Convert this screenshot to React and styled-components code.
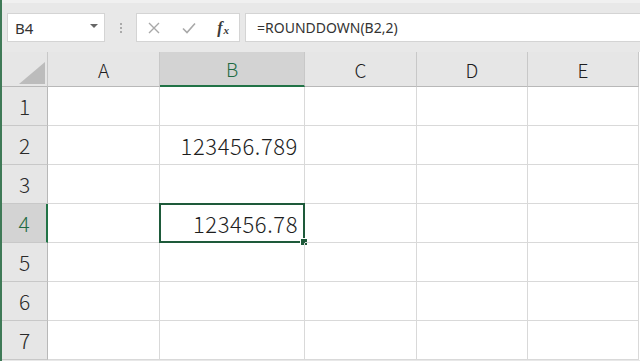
import styled, { createGlobalStyle } from 'styled-components';
import React from 'react';

const GlobalStyle = createGlobalStyle`
  html, body { margin: 0; padding: 0; background: #ffffff; }
  body { width: 640px; height: 361px; overflow: hidden; }
`;

const COLS = ['A', 'B', 'C', 'D', 'E'];
const ROWS = [1, 2, 3, 4, 5, 6, 7];

const values = {
  B2: '123456.789',
  B4: '123456.78',
};

function App() {
  const active = { col: 'B', row: 4 };

  return (
    <Window>
      <GlobalStyle />
      <Toolbar>
        <NameBox>
          <span>B4</span>
          <Caret />
        </NameBox>
        <Grip>
          <i /><i /><i />
        </Grip>
        <ButtonBox>
          <svg width="14" height="14" viewBox="0 0 14 14">
            <path d="M2 2 L12 12 M12 2 L2 12" stroke="#a8a8a8" strokeWidth="1.4" fill="none" />
          </svg>
          <svg width="16" height="14" viewBox="0 0 16 14">
            <path d="M2 7.5 L6 11.5 L14 2.5" stroke="#a8a8a8" strokeWidth="1.6" fill="none" />
          </svg>
          <Fx>f<sub>x</sub></Fx>
        </ButtonBox>
        <FormulaInput>=ROUNDDOWN(B2,2)</FormulaInput>
      </Toolbar>

      <Sheet>
        <Corner>
          <svg width="36" height="26" viewBox="0 0 36 26">
            <path d="M34 2 L34 24 L8 24 Z" fill="#bcbcbc" />
          </svg>
        </Corner>
        {COLS.map(c => (
          <ColHeader key={c} $active={c === active.col}>{c}</ColHeader>
        ))}
        {ROWS.map(r => (
          <React.Fragment key={r}>
            <RowHeader $active={r === active.row}>{r}</RowHeader>
            {COLS.map(c => {
              const id = c + r;
              const isActive = c === active.col && r === active.row;
              return (
                <Cell key={id}>
                  {values[id] && <Value>{values[id]}</Value>}
                  {isActive && (
                    <Selection>
                      <Handle />
                    </Selection>
                  )}
                </Cell>
              );
            })}
          </React.Fragment>
        ))}
      </Sheet>
    </Window>
  );
}

export default App;

const Window = styled.div`
  width: 640px;
  height: 361px;
  overflow: hidden;
  box-sizing: border-box;
  border-left: 2px solid #3f7a57;
  background: #e8e8e8;
`;

const Toolbar = styled.div`
  height: 52px;
  box-sizing: border-box;
  padding: 10px 0 0 5px;
  display: flex;
  align-items: flex-start;
  background: #e8e8e8;
  border-top: 3px solid #f0f0f0;
`;

const NameBox = styled.div`
  width: 98px;
  height: 29px;
  box-sizing: border-box;
  background: #ffffff;
  border: 1px solid #d4d4d4;
  display: flex;
  align-items: center;
  justify-content: space-between;
  padding: 0 6px 0 7px;
  font-family: 'Noto Sans', 'Liberation Sans', sans-serif;
  font-size: 15px;
  color: #333;
`;

const Caret = styled.span`
  width: 0;
  height: 0;
  border-left: 4px solid transparent;
  border-right: 4px solid transparent;
  border-top: 4px solid #666;
  margin-top: -3px;
`;

const Grip = styled.div`
  width: 31px;
  height: 29px;
  display: flex;
  flex-direction: column;
  align-items: center;
  justify-content: center;
  gap: 2px;

  i {
    display: block;
    width: 2px;
    height: 2px;
    background: #aaaaaa;
  }
`;

const ButtonBox = styled.div`
  width: 104px;
  height: 29px;
  box-sizing: border-box;
  background: #ffffff;
  border: 1px solid #d4d4d4;
  display: flex;
  align-items: center;
  justify-content: space-between;
  padding: 0 10px 0 10px;
`;

const Fx = styled.span`
  font-family: 'Liberation Serif', serif;
  font-style: italic;
  font-weight: 700;
  font-size: 16px;
  color: #3a3a3a;

  sub {
    font-size: 11px;
    vertical-align: -1px;
    margin-left: 1px;
  }
`;

const FormulaInput = styled.div`
  flex: 1;
  height: 29px;
  box-sizing: border-box;
  margin-left: 5px;
  background: #ffffff;
  border: 1px solid #d4d4d4;
  border-right: none;
  display: flex;
  align-items: center;
  padding-left: 11px;
  font-family: 'Noto Sans', 'Liberation Sans', sans-serif;
  font-size: 14px;
  color: #333;
`;

const Sheet = styled.div`
  display: grid;
  grid-template-columns: 46px 112px 145px 112px 111px 111px;
  grid-template-rows: 35px repeat(7, 39px);
  background: #ffffff;
`;

const Corner = styled.div`
  background: #e6e6e6;
  border-right: 1px solid #c8c8c8;
  border-bottom: 1px solid #b8b8b8;
  display: flex;
  align-items: flex-end;
  justify-content: flex-end;
`;

const ColHeader = styled.div`
  box-sizing: border-box;
  background: ${p => (p.$active ? '#d3d3d3' : '#e6e6e6')};
  border-right: 1px solid #c8c8c8;
  border-bottom: ${p => (p.$active ? '2px solid #217346' : '1px solid #b8b8b8')};
  display: flex;
  align-items: center;
  justify-content: center;
  font-family: 'Noto Sans CJK JP', 'Noto Sans', sans-serif;
  font-weight: 300;
  font-size: 19px;
  color: ${p => (p.$active ? '#1f6b43' : '#1e1e1e')};
`;

const RowHeader = styled.div`
  box-sizing: border-box;
  background: ${p => (p.$active ? '#d3d3d3' : '#e6e6e6')};
  border-right: ${p => (p.$active ? '2px solid #217346' : '1px solid #b8b8b8')};
  border-bottom: 1px solid #c8c8c8;
  display: flex;
  align-items: center;
  justify-content: center;
  font-family: 'Noto Sans CJK JP', 'Noto Sans', sans-serif;
  font-weight: 300;
  font-size: 21px;
  color: ${p => (p.$active ? '#1f6b43' : '#2a2a2a')};
`;

const Cell = styled.div`
  position: relative;
  box-sizing: border-box;
  border-right: 1px solid #d9d9d9;
  border-bottom: 1px solid #d9d9d9;
  display: flex;
  align-items: center;
  justify-content: flex-end;
  padding-right: 6px;
`;

const Value = styled.span`
  font-family: 'Noto Sans CJK JP', 'Noto Sans', sans-serif;
  font-weight: 300;
  font-size: 22px;
  letter-spacing: 0.6px;
  color: #1e1e1e;
`;

const Selection = styled.div`
  position: absolute;
  left: -1px;
  top: -1px;
  right: -1px;
  bottom: -1px;
  border: 2px solid #1e5a3a;
  pointer-events: none;
`;

const Handle = styled.div`
  position: absolute;
  right: -5px;
  bottom: -5px;
  width: 6px;
  height: 6px;
  background: #1e5a3a;
  border: 1px solid #ffffff;
`;
